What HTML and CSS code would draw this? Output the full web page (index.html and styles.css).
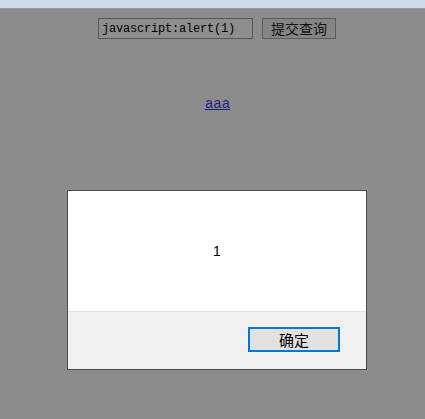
FILE: index.html
```html
<!DOCTYPE html>
<html>
<head>
<meta charset="utf-8">
<link rel="stylesheet" href="styles.css">
</head>
<body>
<div class="topbar"></div>
<div class="page">
  <form class="form">
    <input class="field" type="text" value="javascript:alert(1)">
    <button class="submit" type="button">提交查询</button>
  </form>
  <div class="linkrow"><a class="link" href="#">aaa</a></div>
</div>
<div class="dialog">
  <div class="dialog-body">1</div>
  <div class="dialog-foot">
    <button class="ok" type="button">确定</button>
  </div>
</div>
</body>
</html>
```
FILE: styles.css
```css
html, body {
  margin: 0;
  padding: 0;
  width: 425px;
  height: 419px;
  overflow: hidden;
  background: #8c8c8c;
  font-family: "Liberation Sans", "Noto Sans CJK SC", sans-serif;
}
.topbar {
  height: 8px;
  background: #d0dbe9;
  border-bottom: 1px solid #9a9ea4;
}
.page {
  display: flex;
  flex-direction: column;
  align-items: center;
}
.form {
  display: flex;
  gap: 9px;
  margin: 9px 0 0 9px;
}
.field {
  box-sizing: border-box;
  width: 155px;
  height: 21px;
  margin: 0;
  padding: 0 3px;
  border: 1px solid #555;
  background: #8e8e8e;
  color: #000;
  font-family: "Liberation Mono", "DejaVu Sans Mono", monospace;
  font-size: 12px;
  letter-spacing: -0.2px;
}
.submit {
  box-sizing: border-box;
  width: 74px;
  height: 21px;
  margin: 0;
  padding: 0;
  border: 1px solid #5c5c5c;
  background: #858585;
  color: #111;
  font-family: "Noto Sans CJK SC", sans-serif;
  font-size: 14px;
  line-height: 19px;
}
.linkrow {
  margin: 55px 0 0 10px;
}
.link {
  font-family: "Liberation Mono", "DejaVu Sans Mono", monospace;
  font-size: 14px;
  color: #1f1f8a;
}
.dialog {
  position: absolute;
  left: 67px;
  top: 190px;
  width: 298px;
  height: 178px;
  border: 1px solid #4a4a4a;
  background: #fff;
  display: flex;
  flex-direction: column;
}
.dialog-body {
  height: 120px;
  display: flex;
  align-items: center;
  justify-content: center;
  font-family: "Liberation Sans", sans-serif;
  font-size: 14px;
  color: #000;
}
.dialog-foot {
  flex: 1;
  background: #f0f0f0;
  border-top: 1px solid #e2e2e2;
  display: flex;
  justify-content: flex-end;
  align-items: flex-start;
  padding: 15px 26px 0 0;
}
.ok {
  box-sizing: border-box;
  width: 92px;
  height: 25px;
  margin: 0;
  padding: 0;
  border: 2px solid #0078d7;
  background: #e1e1e1;
  color: #000;
  font-family: "Noto Sans CJK SC", sans-serif;
  font-size: 15px;
  line-height: 20px;
}
```
